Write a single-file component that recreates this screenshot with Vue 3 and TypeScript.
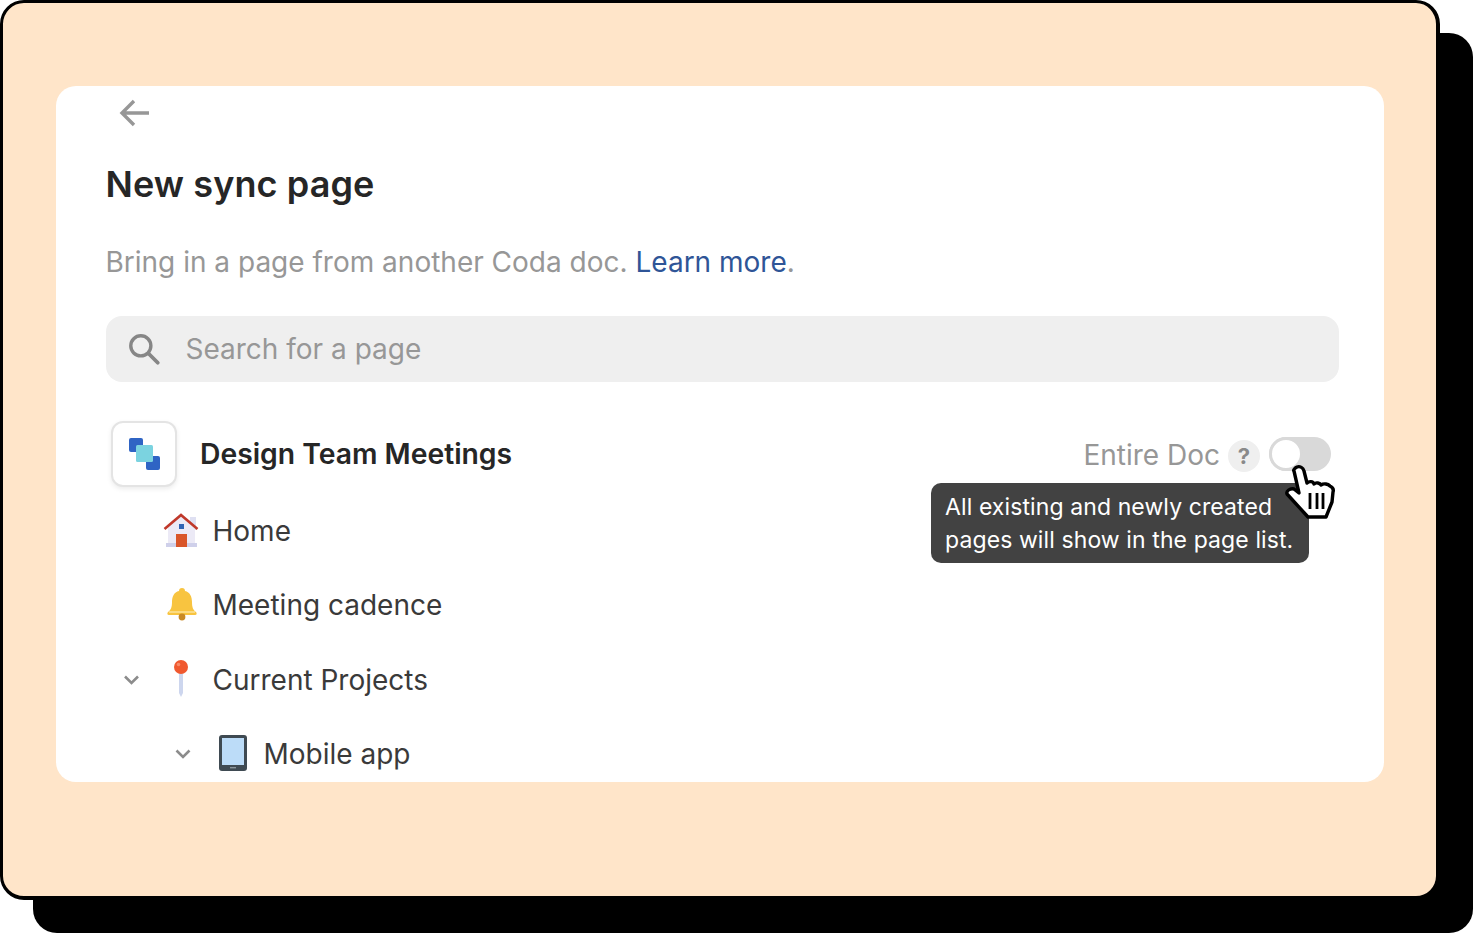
<script setup lang="ts">
const tooltipLines = ['All existing and newly created', 'pages will show in the page list.']
</script>

<template>
  <div class="page">
    <div class="frame">
      <div class="panel">
        <svg class="back" width="32" height="32" viewBox="0 0 32 32" fill="none">
          <path d="M30 16H3M15 4 3 16l12 12" stroke="#979797" stroke-width="3.400" />
        </svg>
        <h1 class="title">New sync page</h1>
        <p class="intro">Bring in a page from another Coda doc. <a class="link">Learn more</a>.</p>

        <div class="search">
          <svg width="36" height="36" viewBox="0 0 34 34" fill="none">
            <circle cx="14" cy="14" r="9.5" stroke="#868686" stroke-width="3.200" />
            <path d="M21.5 21.5 30 30" stroke="#868686" stroke-width="3.600" stroke-linecap="round" />
          </svg>
          <span>Search for a page</span>
        </div>

        <div class="doc-row">
          <div class="doc-icon">
            <svg width="34" height="34" viewBox="0 0 34 34">
              <rect x="2" y="1" width="14" height="14" rx="2" fill="#2f64c4" />
              <rect x="19" y="19" width="14" height="14" rx="2" fill="#2f64c4" />
              <rect x="9" y="8" width="17" height="17" rx="1.5" fill="#7bd3e0" />
            </svg>
          </div>
          <span class="doc-name">Design Team Meetings</span>
          <div class="doc-right">
            <span class="entire">Entire Doc</span>
            <span class="help">?</span>
            <span class="toggle"><span class="knob"></span></span>
          </div>
        </div>

        <div class="tree">
          <div class="item lvl1">
            <span class="chev"></span>
            <svg class="emoji" width="36" height="36" viewBox="0 0 36 36">
              <rect x="27" y="4" width="6" height="13" fill="#dfe0f2" />
              <path d="M18 2 32 15v17H5V15z" fill="#eceaf6" />
              <rect x="3" y="30" width="31" height="4" fill="#cfd0ea" />
              <path d="M1.500 16 18 2l16.500 14" fill="none" stroke="#c0392b" stroke-width="2.600" />
              <rect x="16" y="11" width="5" height="5" fill="#2f64b4" />
              <rect x="13" y="21" width="11" height="13" fill="#d9562a" />
            </svg>
            <span>Home</span>
          </div>
          <div class="item lvl1">
            <span class="chev"></span>
            <svg class="emoji" width="36" height="36" viewBox="0 0 36 36">
              <path d="M19 1c2 0 3 1 3 3 5 1 7 6 7 11 0 5 1 8 4 10 1 1 1 3-1 3H6c-2 0-2-2-1-3 3-2 4-5 4-10 0-5 2-10 7-11 0-2 1-3 3-3z" fill="#f8c440" />
              <path d="M6 25h26" stroke="#fde39a" stroke-width="1.500" />
              <circle cx="19" cy="30" r="3.400" fill="#c98a26" />
            </svg>
            <span>Meeting cadence</span>
          </div>
          <div class="item lvl1">
            <svg class="chev" width="20" height="20" viewBox="0 0 20 20" fill="none">
              <path d="M3 6.500 9.500 13 16 6.500" stroke="#8c8c8c" stroke-width="2.600" />
            </svg>
            <svg class="emoji" width="36" height="40" viewBox="0 0 36 40">
              <path d="M16 12h4v21l-2 4-2-4z" fill="#cdd6ee" />
              <circle cx="18" cy="7" r="7" fill="#f0592f" />
              <circle cx="15.500" cy="4.500" r="1.800" fill="#f88a68" />
            </svg>
            <span>Current Projects</span>
          </div>
          <div class="item lvl2">
            <svg class="chev" width="20" height="20" viewBox="0 0 20 20" fill="none">
              <path d="M3.500 6.500 10 13l6.500-6.500" stroke="#8c8c8c" stroke-width="2.600" />
            </svg>
            <svg class="emoji" width="36" height="38" viewBox="0 0 36 38">
              <rect x="5" y="0" width="28" height="36" rx="3" fill="#3f4a52" />
              <rect x="8" y="3" width="22" height="27" fill="#bcdcf8" />
              <rect x="16" y="32" width="6" height="1.400" fill="#8a949a" />
            </svg>
            <span>Mobile app</span>
          </div>
        </div>

        <div class="tooltip">
          <div v-for="line in tooltipLines" :key="line">{{ line }}</div>
        </div>
        <svg class="cursor" width="54" height="58" viewBox="0 0 54 58">
          <path
            d="M13 3c3-1 6 1 7 4l3 12c2-2 6-2 7 1 2-2 6-1 7 1 3-2 7-1 9 1 2 1 4 3 3 6l-1 10-6 15H24L3 30c-1-3 3-6 7-5l5 4-5-22c-1-1 1-3 3-4z"
            fill="#fff" stroke="#000" stroke-width="3.400" stroke-linejoin="round"
          />
          <path d="M26 29v16M33 29v16M39 29v16" stroke="#000" stroke-width="2.800" />
        </svg>
      </div>
    </div>
  </div>
</template>

<style scoped>
.page {
  width: 1473px;
  height: 933px;
  overflow: hidden;
  background: #fff;
  font-family: Inter, 'Noto Sans', sans-serif;
}

.frame {
  box-sizing: border-box;
  width: 1440px;
  height: 900px;
  padding: 83px 52px 0 53px;
  background: #ffe5c9;
  border-style: solid;
  border-color: #000;
  border-width: 3px 4px 4px 3px;
  border-radius: 24px;
  box-shadow: 33px 33px 0 #000;
}

.panel {
  position: relative;
  box-sizing: border-box;
  height: 696px;
  padding: 0 45px 0 49.5px;
  overflow: hidden;
  background: #fff;
  border-radius: 20px;
}

.back {
  display: block;
  margin: 11px 0 0 13px;
}

.title {
  margin: 33px 0 0;
  font-size: 36px;
  font-weight: 600;
  line-height: 44px;
  letter-spacing: 0.1px;
  color: #262626;
}

.intro {
  margin: 36px 0 0;
  font-size: 28px;
  line-height: 40px;
  color: #979797;
}

.link {
  color: #2f5597;
}

.search {
  display: flex;
  align-items: center;
  gap: 24px;
  height: 66px;
  margin-top: 34px;
  padding-left: 20px;
  font-size: 28px;
  color: #979797;
  background: #efefef;
  border-radius: 16px;
}

.doc-row {
  display: flex;
  align-items: center;
  margin-top: 39px;
  padding: 0 8px 0 5.5px;
}

.doc-icon {
  display: flex;
  align-items: center;
  justify-content: center;
  box-sizing: border-box;
  width: 66px;
  height: 66px;
  background: #fff;
  border: 2px solid #e4e4e4;
  border-radius: 12px;
  box-shadow: 0 2px 5px rgba(0, 0, 0, 0.08);
}

.doc-name {
  margin-left: 23px;
  font-size: 28.3px;
  font-weight: 600;
  color: #262626;
}

.doc-right {
  display: flex;
  align-items: center;
  margin-left: auto;
}

.entire {
  margin-top: 2px;
  font-size: 28px;
  color: #979797;
}

.help {
  display: flex;
  align-items: center;
  justify-content: center;
  width: 32px;
  height: 32px;
  margin: 4px 9px 0 8px;
  font-size: 22px;
  font-weight: 700;
  color: #8a8a8a;
  background: #efefef;
  border-radius: 50%;
}

.toggle {
  display: block;
  width: 62px;
  height: 34px;
  background: #d9d9d9;
  border-radius: 17px;
}

.knob {
  display: block;
  box-sizing: border-box;
  width: 34px;
  height: 34px;
  background: #fff;
  border: 3px solid #d9d9d9;
  border-radius: 50%;
}

.tree {
  margin-top: 6.5px;
}

.item {
  display: flex;
  align-items: center;
  height: 74.5px;
  font-size: 28px;
  color: #3a3a3a;
}

.lvl1 {
  padding-left: 16px;
}

.lvl2 {
  padding-left: 67px;
}

.chev {
  flex: none;
  width: 20px;
  height: 20px;
}

.emoji {
  flex: none;
  margin: 0 14px 0 21px;
}

.tooltip {
  position: absolute;
  top: 397px;
  left: 875px;
  padding: 8px 16px 6px 14px;
  font-size: 23px;
  line-height: 33px;
  letter-spacing: 0.1px;
  color: #fff;
  background: #424242;
  border-radius: 10px;
}

.cursor {
  position: absolute;
  top: 378px;
  left: 1228px;
}
</style>
